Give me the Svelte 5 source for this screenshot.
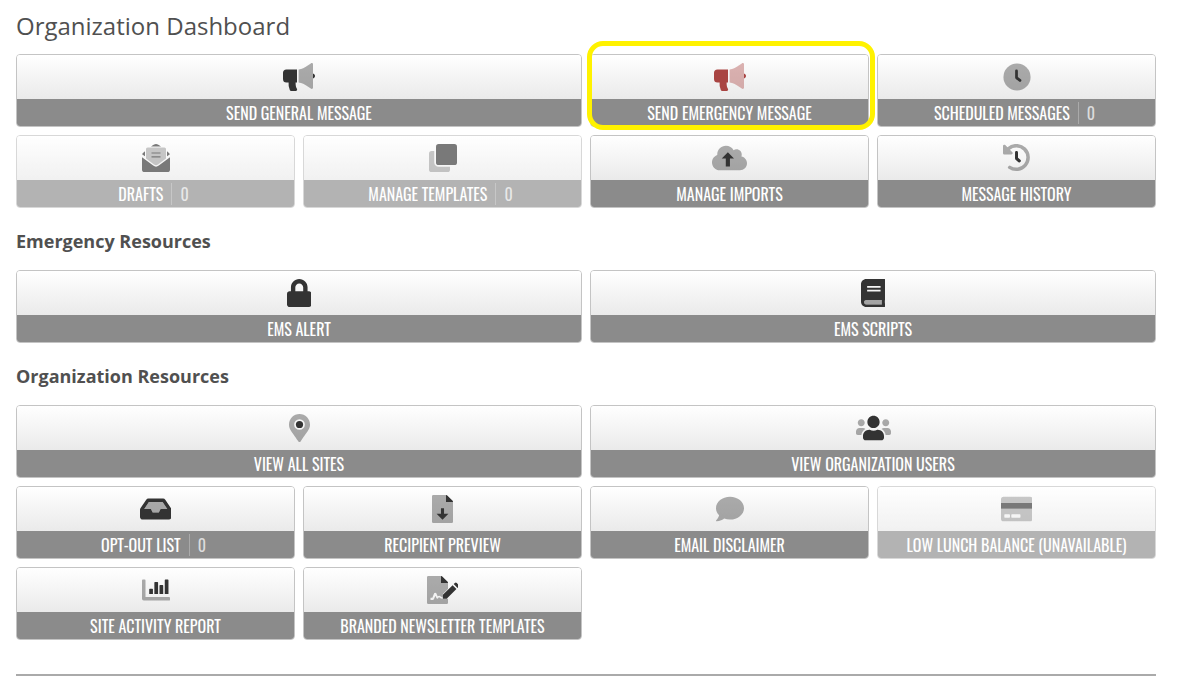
<script>
  // two-tone icons: `primary` is solid, `secondary` is drawn faded behind it
  const icons = {
    megaphone: {
      w: 36,
      h: 28,
      primary:
        'M5.5 6.5H16v13h-1.4c0 3 .3 4.8 1.3 6.3.6.9.1 2.2-1.2 2.2h-4.1c-.8 0-1.5-.4-1.8-1.1a14 14 0 0 1-1.2-7.4H5.5A3.5 3.5 0 0 1 2 16v-6a3.5 3.5 0 0 1 3.5-3.5zM32 10.5c1.3.4 2 1.4 2 2.5s-.7 2.1-2 2.5z',
      secondary:
        'M17.6 6.5c3.5-.4 6-1.8 8-3.3L29.8.4c1-.7 2.2-.2 2.2.8v23.6c0 1-1.2 1.5-2.2.8l-4.2-2.8c-2-1.5-4.5-2.9-8-3.3z'
    },
    clock: {
      w: 512,
      h: 512,
      primary:
        'M248 120a24 24 0 0 1 24 24v112l54 43a25 25 0 0 1-32 40l-60-48a32 32 0 0 1-12-25V144a24 24 0 0 1 26-24z',
      secondary: 'M256 8a248 248 0 1 0 0 496 248 248 0 0 0 0-496z'
    },
    envelope: {
      w: 28,
      h: 28,
      primary:
        'M14 0c1.5 0 3 1 5 2.6H9C11 1 12.5 0 14 0zM3 7.2v5L.3 10.4c0-1.4 1-1.6 2.7-3.2zM25 7.2v5l2.7-1.8c0-1.4-1-1.6-2.7-3.2zM9.5 8.4h9v1.2h-9zM9.5 12.2h9v1.2h-9zM0 13.2l11.2 8.4a4.6 4.6 0 0 0 5.6 0L28 13.2v12.2a2.6 2.6 0 0 1-2.6 2.6H2.6A2.6 2.6 0 0 1 0 25.4z',
      secondary:
        'M4 5a1.6 1.6 0 0 1 1.6-1.6h16.8A1.6 1.6 0 0 1 24 5v9.4l-8 6a3.4 3.4 0 0 1-4 0l-8-6z'
    },
    clone: {
      w: 512,
      h: 512,
      primary:
        'M176 0h288a48 48 0 0 1 48 48v288a48 48 0 0 1-48 48H176a48 48 0 0 1-48-48V48a48 48 0 0 1 48-48z',
      secondary:
        'M48 128h48v208a80 80 0 0 0 80 80h208v48a48 48 0 0 1-48 48H48a48 48 0 0 1-48-48V176a48 48 0 0 1 48-48z'
    },
    cloud: {
      w: 640,
      h: 512,
      primary: 'M290 150L402 266h-74v146h-76V266h-74z',
      secondary:
        'M537.6 226.6c4.1-10.7 6.4-22.4 6.4-34.6 0-53-43-96-96-96-19.7 0-38.1 6-53.3 16.2C367 64.2 315.3 32 256 32c-88.4 0-160 71.6-160 160 0 2.7.1 5.4.2 8.1C40.2 219.8 0 273.2 0 336c0 79.5 64.5 144 144 144h368c70.7 0 128-57.3 128-128 0-61.9-44-113.6-102.4-125.4z'
    },
    history: {
      w: 512,
      h: 512,
      primary:
        'M248 130a26 26 0 0 1 26 26v96l44 36a28 28 0 0 1-34 44l-50-38a34 34 0 0 1-14-27V156a26 26 0 0 1 28-26z',
      secondary:
        'M24 12c6 0 12 2 17 7l40 40A248 248 0 1 1 98 448a24 24 0 0 1-1-35l11-11a24 24 0 0 1 32-2 184 184 0 1 0-14-295l45 45c15 15 4 41-17 41H24a24 24 0 0 1-24-24V36a24 24 0 0 1 24-24z'
    },
    lock: {
      w: 448,
      h: 512,
      primary:
        'M400 224h-24v-72C376 68.2 307.8 0 224 0S72 68.2 72 152v72H48c-26.5 0-48 21.5-48 48v192c0 26.5 21.5 48 48 48h352c26.5 0 48-21.5 48-48V272c0-26.5-21.5-48-48-48zm-104 0H152v-72c0-39.7 32.3-72 72-72s72 32.3 72 72v72z'
    },
    book: {
      w: 448,
      h: 512,
      primary:
        'M448 360V24c0-13.3-10.7-24-24-24H96C43 0 0 43 0 96v320c0 53 43 96 96 96h328c13.3 0 24-10.7 24-24v-16c0-7.5-3.5-14.3-8.9-18.7-4.2-15.4-4.2-59.3 0-74.7 5.4-4.3 8.9-11.1 8.9-18.6zM112 134c0-3.300 2.700-6 6-6h234c3.300 0 6 2.700 6 6v20c0 3.300-2.700 6-6 6H118c-3.300 0-6-2.700-6-6zm0 70c0-3.300 2.700-6 6-6h234c3.300 0 6 2.700 6 6v20c0 3.300-2.700 6-6 6H118c-3.300 0-6-2.700-6-6zM381.400 464H96c-26 0-40-20-40-40 0-22 16-40 40-40h285.400c-1.900 17-1.900 63 0 80z',
      secondary: 'M381.400 464H96c-26 0-40-20-40-40 0-22 16-40 40-40h285.400c-1.900 17-1.900 63 0 80z'
    },
    marker: {
      w: 384,
      h: 512,
      primary: 'M192 126a66 66 0 1 0 0 132 66 66 0 0 0 0-132z',
      secondary:
        'M172.300 501.700C27 291 0 269.400 0 192 0 86 86 0 192 0s192 86 192 192c0 77.400-27 99-172.300 309.700-9.500 13.800-29.900 13.800-39.400 0zM192 94a98 98 0 1 0 0 196 98 98 0 0 0 0-196z'
    },
    users: {
      w: 640,
      h: 512,
      primary:
        'M320 256c61.900 0 112-50.100 112-112S381.900 32 320 32 208 82.100 208 144s50.100 112 112 112zm76.800 32h-8.300c-20.800 10-43.900 16-68.500 16s-47.600-6-68.500-16h-8.300C179.600 288 128 339.600 128 403.200V432c0 26.500 21.500 48 48 48h288c26.500 0 48-21.500 48-48v-28.800c0-63.600-51.600-115.200-115.200-115.200z',
      secondary:
        'M96 224c35.300 0 64-28.700 64-64s-28.700-64-64-64-64 28.700-64 64 28.700 64 64 64zm448 0c35.300 0 64-28.700 64-64s-28.700-64-64-64-64 28.700-64 64 28.700 64 64 64zm32 32h-64c-17.600 0-33.500 7.100-45.100 18.600 40.300 22.100 68.900 62 75.100 109.400h66c17.700 0 32-14.300 32-32v-32c0-35.300-28.700-64-64-64zM173.100 274.600C161.500 263.100 145.600 256 128 256H64c-35.300 0-64 28.700-64 64v32c0 17.700 14.300 32 32 32h65.900c6.300-47.400 34.900-87.300 75.200-109.400z'
    },
    inbox: {
      w: 576,
      h: 512,
      primary:
        'M567.900 243.900L462.300 85.400A48 48 0 0 0 422.300 64H153.700a48 48 0 0 0-39.900 21.400L8.100 243.900A48 48 0 0 0 0 270.500V400c0 26.500 21.500 48 48 48h480c26.500 0 48-21.500 48-48V270.500a48 48 0 0 0-8.100-26.600zM162.300 128h251.400l85.400 128H376l-32 64H232l-32-64H76.900z',
      secondary: 'M162.300 128h251.400l85.400 128H376l-32 64H232l-32-64H76.900z'
    },
    download: {
      w: 384,
      h: 512,
      primary:
        'M377 105L279 7a24 24 0 0 0-17-7h-6v128h128v-6a24 24 0 0 0-7-17zM164 240h56v102h80L192 452 84 342h80z',
      secondary:
        'M384 128H256V0H24A24 24 0 0 0 0 24v464a24 24 0 0 0 24 24h336a24 24 0 0 0 24-24z'
    },
    comment: {
      w: 512,
      h: 512,
      secondary:
        'M256 32C114.600 32 0 125.100 0 240c0 49.600 21.400 95 57 130.700C44.500 421.100 2.700 466 2.200 466.500c-2.200 2.300-2.800 5.700-1.500 8.700S4.800 480 8 480c66.300 0 116-31.800 140.600-51.400 32.700 12.300 69 19.400 107.400 19.400 141.400 0 256-93.100 256-208S397.400 32 256 32z'
    },
    card: {
      w: 576,
      h: 512,
      primary: 'M0 144h576v108H0z',
      secondary:
        'M48 32h480a48 48 0 0 1 48 48v64H0V80a48 48 0 0 1 48-48zM0 252h576v180a48 48 0 0 1-48 48H48a48 48 0 0 1-48-48zM72 352a12 12 0 0 0-12 12v40a12 12 0 0 0 12 12h80a12 12 0 0 0 12-12v-40a12 12 0 0 0-12-12zm128 0a12 12 0 0 0-12 12v40a12 12 0 0 0 12 12h144a12 12 0 0 0 12-12v-40a12 12 0 0 0-12-12z'
    },
    chart: {
      w: 512,
      h: 512,
      primary:
        'M144 232h44a12 12 0 0 1 12 12v84h-68v-84a12 12 0 0 1 12-12zM238 108h44a12 12 0 0 1 12 12v208h-68V120a12 12 0 0 1 12-12zM332 164h44a12 12 0 0 1 12 12v152h-68V176a12 12 0 0 1 12-12zM428 64h44a12 12 0 0 1 12 12v252h-68V76a12 12 0 0 1 12-12z',
      secondary:
        'M16 64h32a16 16 0 0 1 16 16v304h432a16 16 0 0 1 16 16v32a16 16 0 0 1-16 16H32a32 32 0 0 1-32-32V80a16 16 0 0 1 16-16z'
    },
    signature: {
      w: 576,
      h: 512,
      primary:
        'M377 105L279 7a24 24 0 0 0-17-7h-6v128h128v-6a24 24 0 0 0-7-17zM290 344L468 168l70 70-178 178h-70zM488 148l22-22a24 24 0 0 1 34 0l36 36a24 24 0 0 1 0 34l-22 22z',
      secondary:
        'M384 128H256V0H24A24 24 0 0 0 0 24v464a24 24 0 0 0 24 24h336a24 24 0 0 0 24-24v-72h-94c-18 2-42-4-58-20-10-10-20-8-28 10-8 14-26 10-32-4l-18-40-28 64c-4 8-12 12-22 12H64v-40h34l32-82c8-16 32-16 40 0l24 56c22-18 44-14 58 4 8 10 18 14 38 14V330l94-92z'
    }
  };

  const sections = [
    {
      tiles: [
        { label: 'Send General Message', icon: 'megaphone', wide: true },
        { label: 'Send Emergency Message', icon: 'megaphone', emergency: true },
        { label: 'Scheduled Messages', icon: 'clock', count: 0 },
        { label: 'Drafts', icon: 'envelope', count: 0, disabled: true },
        { label: 'Manage Templates', icon: 'clone', count: 0, disabled: true },
        { label: 'Manage Imports', icon: 'cloud' },
        { label: 'Message History', icon: 'history' }
      ]
    },
    {
      title: 'Emergency Resources',
      tiles: [
        { label: 'EMS Alert', icon: 'lock', wide: true },
        { label: 'EMS Scripts', icon: 'book', wide: true }
      ]
    },
    {
      title: 'Organization Resources',
      tiles: [
        { label: 'View All Sites', icon: 'marker', wide: true },
        { label: 'View Organization Users', icon: 'users', wide: true },
        { label: 'Opt-Out List', icon: 'inbox', count: 0 },
        { label: 'Recipient Preview', icon: 'download' },
        { label: 'Email Disclaimer', icon: 'comment' },
        { label: 'Low Lunch Balance (Unavailable)', icon: 'card', disabled: true },
        { label: 'Site Activity Report', icon: 'chart' },
        { label: 'Branded Newsletter Templates', icon: 'signature' }
      ]
    }
  ];
</script>

<main>
  <h1>Organization Dashboard</h1>

  {#each sections as section}
    <section>
      {#if section.title}
        <h2>{section.title}</h2>
      {/if}
      <ul>
        {#each section.tiles as tile}
          {@const icon = icons[tile.icon]}
          <li class:wide={tile.wide} class:emergency={tile.emergency}>
            <button type="button" disabled={tile.disabled}>
              <span class="icon">
                <svg viewBox="0 0 {icon.w} {icon.h}" aria-hidden="true">
                  {#if icon.secondary}
                    <path class="secondary" fill-rule="evenodd" d={icon.secondary} />
                  {/if}
                  {#if icon.primary}
                    <path fill-rule="evenodd" d={icon.primary} />
                  {/if}
                </svg>
              </span>
              <span class="label">
                {tile.label}
                {#if tile.count !== undefined}
                  <span class="count">{tile.count}</span>
                {/if}
              </span>
            </button>
          </li>
        {/each}
      </ul>
    </section>
  {/each}

  <hr />
</main>

<style>
  :global(body) {
    margin: 0;
    background: #fff;
    overflow: hidden;
  }

  main {
    padding: 8px 23px 0 16px;
    color: #505050;
    font-family: 'Open Sans', sans-serif;
  }

  h1 {
    margin: 0 0 10px;
    font-size: 24px;
    line-height: 36px;
    font-weight: 400;
  }

  h2 {
    margin: 0;
    padding: 21px 0 17px;
    font-size: 18px;
    line-height: 24px;
    font-weight: 700;
  }

  ul {
    display: grid;
    grid-template-columns: repeat(4, 1fr);
    gap: 8px;
    margin: 0;
    padding: 0;
    list-style: none;
  }

  li {
    position: relative;
  }

  .wide {
    grid-column: span 2;
  }

  button {
    display: block;
    width: 100%;
    padding: 0;
    overflow: hidden;
    border: 1px solid #c4c4c4;
    border-radius: 4px;
    background: #fff;
    color: #333;
    cursor: pointer;
  }

  button:disabled {
    opacity: 0.65;
    cursor: not-allowed;
  }

  .icon {
    display: flex;
    align-items: center;
    justify-content: center;
    height: 44px;
    background: linear-gradient(#fff, #eaeaea);
  }

  svg {
    display: block;
    height: 28px;
    fill: currentColor;
  }

  .secondary {
    opacity: 0.4;
  }

  .label {
    display: flex;
    align-items: center;
    justify-content: center;
    height: 27px;
    background: #8b8b8b;
    color: #fff;
    font-family: Oswald, 'Liberation Sans Narrow', 'Liberation Sans', sans-serif;
    font-size: 16px;
    line-height: 24px;
    text-transform: uppercase;
    white-space: nowrap;
  }

  .count {
    margin-left: 8px;
    padding: 0 4px 0 8px;
    border-left: 1px solid #aaa;
    color: #ddd;
    line-height: 22px;
  }

  .emergency button {
    color: #a94442;
  }

  .emergency::after {
    content: '';
    position: absolute;
    inset: -13px -6px -3px -3px;
    border: 5px solid #fff200;
    border-radius: 16px;
    pointer-events: none;
  }

  hr {
    height: 2px;
    margin: 34px 0 0;
    border: 0;
    background: #aaa;
  }
</style>
